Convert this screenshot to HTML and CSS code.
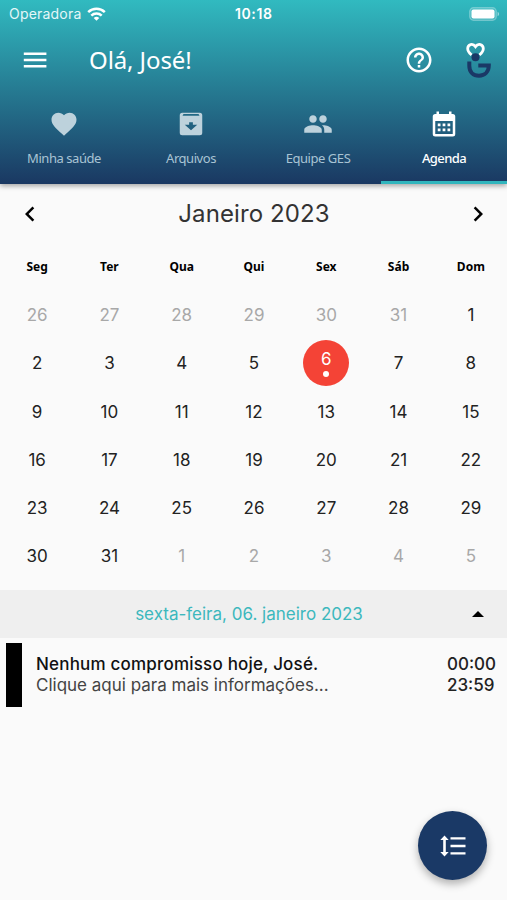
FILE: index.html
```html
<!DOCTYPE html>
<html lang="pt-BR">
<head>
    <meta charset="UTF-8">
    <meta name="viewport" content="width=device-width, initial-scale=1.0">
    <title>Agenda</title>
    <link rel="stylesheet" href="styles.css">
</head>
<body>
    <header>
        <div class="status-bar">
            <div class="carrier">
                <span>Operadora</span>
                <svg width="19" height="14" viewBox="0 0 19 14" fill="none" stroke="#fff" stroke-width="2.5">
                    <path d="M1.2 5.2a12 12 0 0 1 16.6 0"/>
                    <path d="M4.3 8.6a7.5 7.5 0 0 1 10.4 0"/>
                    <path d="M6.7 11a4 4 0 0 1 5.6 0L9.5 13.8z" fill="#fff" stroke="none"/>
                </svg>
            </div>
            <span class="time">10:18</span>
            <svg class="battery" width="31" height="14" viewBox="0 0 31 14">
                <rect x=".7" y=".7" width="26.6" height="12.6" rx="3.8" fill="#fff" fill-opacity=".15" stroke="#fff" stroke-opacity=".3" stroke-width="1.2"/>
                <rect x="2.5" y="2.5" width="23" height="9" rx="2" fill="#fff"/>
                <path d="M28.6 4.8c2 .8 2 3.6 0 4.4z" fill="#fff" fill-opacity=".5"/>
            </svg>
        </div>
        <div class="app-bar">
            <svg class="menu" width="24" height="18" viewBox="0 0 24 18" fill="#fff">
                <path d="M.8 1.5h22.600v2.6H.8zM.8 7.7h22.600v2.6H.8zM.8 13.9h22.600v2.6H.8z"/>
            </svg>
            <h1>Olá, José!</h1>
            <svg class="help" width="30" height="30" viewBox="0 0 24 24" fill="#fff">
                <path d="M11 18h2v-2h-2v2zm1-16C6.48 2 2 6.48 2 12s4.480 10 10 10 10-4.480 10-10S17.520 2 12 2zm0 18c-4.410 0-8-3.590-8-8s3.590-8 8-8 8 3.590 8 8-3.590 8-8 8zm0-14c-2.210 0-4 1.790-4 4h2c0-1.100.9-2 2-2s2 .9 2 2c0 2-3 1.750-3 5h2c0-2.250 3-2.500 3-5 0-2.210-1.790-4-4-4z"/>
            </svg>
            <svg class="logo" width="28" height="38" viewBox="0 0 28 38" fill="none">
                <path d="M8.600 14C6.300 12 4.700 10.400 4.700 7.700 4.700 3.200 9.800 1.800 12.500 5.600 15.200 1.800 20.300 3.200 20.300 7.700c0 2.700-1.600 4.300-3.900 6.300" stroke="#fff" stroke-width="2.800"/>
                <circle cx="12.500" cy="16.300" r="4" fill="#1a3866"/>
                <path d="M6.300 20.500v4.200C6.300 30.900 10.200 34.700 16 34.700c5.800 0 9.800-4 9.800-10.100h-10.500" stroke="#1a3866" stroke-width="4"/>
            </svg>
        </div>
        <nav>
            <a class="tab">
                <svg width="30" height="30" viewBox="0 0 24 24"><path d="M12 21.350l-1.450-1.320C5.400 15.360 2 12.280 2 8.500 2 5.420 4.420 3 7.500 3c1.740 0 3.410.81 4.500 2.090C13.090 3.810 14.760 3 16.500 3 19.580 3 22 5.420 22 8.500c0 3.780-3.400 6.860-8.550 11.540L12 21.350z"/></svg>
                <span>Minha saúde</span>
            </a>
            <a class="tab">
                <svg width="30" height="30" viewBox="0 0 24 24"><path fill-rule="evenodd" d="M5 3h14a2 2 0 0 1 2 2v14a2 2 0 0 1-2 2H5a2 2 0 0 1-2-2V5a2 2 0 0 1 2-2zM6 3.900L5.200 5.400h13.600l-.8-1.500zM10.500 10.500v2H7L12 17l5-4.500h-3.500v-2z"/></svg>
                <span>Arquivos</span>
            </a>
            <a class="tab">
                <svg width="30" height="30" viewBox="0 0 24 24"><path d="M16 11c1.660 0 2.990-1.340 2.990-3S17.660 5 16 5s-3 1.340-3 3 1.340 3 3 3zm-8 0c1.660 0 2.990-1.340 2.990-3S9.660 5 8 5 5 6.340 5 8s1.340 3 3 3zm0 2c-2.330 0-7 1.170-7 3.500V19h14v-2.500c0-2.330-4.670-3.500-7-3.500zm8 0c-.29 0-.62.020-.97.050 1.160.84 1.970 1.970 1.970 3.450V19h6v-2.500c0-2.330-4.670-3.500-7-3.500z"/></svg>
                <span>Equipe GES</span>
            </a>
            <a class="tab active">
                <svg width="30" height="30" viewBox="0 0 24 24"><path fill-rule="evenodd" d="M6 2h2v2h8V2h2v2h1a2 2 0 0 1 2 2v14a2 2 0 0 1-2 2H5a2 2 0 0 1-2-2V6a2 2 0 0 1 2-2h1zM5 9.500V20h14V9.500z"/><path d="M7 11.500h2.200v2.200H7zM10.900 11.500h2.200v2.200h-2.200zM14.800 11.500H17v2.200h-2.200zM7 15.600h2.200v2.200H7zM10.900 15.600h2.200v2.200h-2.200zM14.800 15.600H17v2.200h-2.200z"/></svg>
                <span>Agenda</span>
            </a>
        </nav>
    </header>

    <main>
        <div class="month">
            <svg width="30" height="30" viewBox="0 0 24 24"><path d="M15.410 7.410L14 6l-6 6 6 6 1.410-1.410L10.830 12z"/></svg>
            <h2>Janeiro 2023</h2>
            <svg width="30" height="30" viewBox="0 0 24 24"><path d="M10 6L8.590 7.410 13.170 12l-4.580 4.590L10 18l6-6z"/></svg>
        </div>

        <div class="weekdays">
            <span>Seg</span><span>Ter</span><span>Qua</span><span>Qui</span><span>Sex</span><span>Sáb</span><span>Dom</span>
        </div>

        <div class="days">
            <span class="out">26</span><span class="out">27</span><span class="out">28</span><span class="out">29</span><span class="out">30</span><span class="out">31</span><span>1</span>
            <span>2</span><span>3</span><span>4</span><span>5</span><span class="selected">6</span><span>7</span><span>8</span>
            <span>9</span><span>10</span><span>11</span><span>12</span><span>13</span><span>14</span><span>15</span>
            <span>16</span><span>17</span><span>18</span><span>19</span><span>20</span><span>21</span><span>22</span>
            <span>23</span><span>24</span><span>25</span><span>26</span><span>27</span><span>28</span><span>29</span>
            <span>30</span><span>31</span><span class="out">1</span><span class="out">2</span><span class="out">3</span><span class="out">4</span><span class="out">5</span>
        </div>

        <div class="date-bar">
            <span>sexta-feira, 06. janeiro 2023</span>
            <svg width="12" height="6" viewBox="0 0 12 6"><path d="M0 6l6-6 6 6z"/></svg>
        </div>

        <div class="event">
            <div class="event-color"></div>
            <div class="event-text">
                <strong>Nenhum compromisso hoje, José.</strong>
                <p>Clique aqui para mais informações...</p>
            </div>
            <div class="event-time">
                <span>00:00</span>
                <span>23:59</span>
            </div>
        </div>
    </main>

    <button class="fab">
        <svg width="26" height="22" viewBox="0 0 26 22" fill="#fff">
            <path d="M4.500 .6L8.700 5H5.800v12h2.900L4.500 21.400 .3 17h2.900V5H.3z"/>
            <path d="M10.500 2.200h15v2.400h-15zM10.500 9.800h15v2.400h-15zM10.500 17.200h15v2.400h-15z"/>
        </svg>
    </button>
</body>
</html>
```
FILE: styles.css
```css
* {
    box-sizing: border-box;
}
body {
    font-family: Inter, "Liberation Sans", sans-serif;
    margin: 0;
    height: 900px;
    overflow: hidden;
    background-color: #fafafa;
    color: #222;
}
svg {
    display: block;
    flex: none;
}
header {
    height: 184px;
    background: linear-gradient(#31bac0, #1a3862);
    color: #fff;
    box-shadow: 0 2px 5px rgba(0, 0, 0, 0.35);
}

/* Phone status bar */
.status-bar {
    height: 27px;
    padding: 0 7px 0 9px;
    display: grid;
    grid-template-columns: 1fr 39px 1fr;
    align-items: center;
    font-size: 14px;
}
.carrier {
    display: flex;
    align-items: center;
    gap: 6px;
    color: #e4f7f8;
    letter-spacing: 0.2px;
}
.time {
    font-weight: 600;
    letter-spacing: 0.6px;
}
.battery {
    justify-self: end;
}

.app-bar {
    height: 66px;
    padding: 0 16px 0 23px;
    display: flex;
    align-items: center;
}
h1 {
    margin: 0 auto 2px 42px;
    font-family: "Noto Sans", sans-serif;
    font-size: 24px;
    font-weight: 400;
    letter-spacing: -0.1px;
}
.logo {
    margin-left: 29px;
}

/* Tabs */
nav {
    height: 91px;
    display: flex;
}
.tab {
    flex: 1;
    display: flex;
    flex-direction: column;
    align-items: center;
    padding: 16px 0 0 1px;
    font-family: "Noto Sans", sans-serif;
    font-size: 13px;
    line-height: 20px;
    letter-spacing: -0.45px;
    color: #a9c4d4;
    border-bottom: 3px solid transparent;
}
.tab svg {
    fill: #bdd2dc;
    margin-bottom: 9px;
}
.tab.active {
    padding-left: 0;
    color: #fff;
    font-weight: 500;
    letter-spacing: -0.6px;
    border-bottom-color: #31b5bd;
}
.tab.active svg {
    fill: #fff;
}

/* Calendar */
.month {
    height: 59px;
    padding: 0 14px 0 15px;
    display: flex;
    justify-content: space-between;
    align-items: center;
}
h2 {
    margin: 0;
    font-size: 24px;
    font-weight: 400;
    letter-spacing: 0.1px;
    color: #333;
}
.weekdays, .days {
    display: grid;
    grid-template-columns: repeat(7, 1fr);
    padding-left: 1px;
    text-align: center;
}
.weekdays {
    height: 46px;
    align-items: center;
    font-family: "Noto Sans", sans-serif;
    font-size: 12px;
    font-weight: 700;
    color: #000;
}
.days {
    height: 301px;
    padding-top: 2px;
    padding-bottom: 9.5px;
    grid-template-rows: repeat(6, 1fr);
    place-items: center;
    font-size: 17px;
}
.out {
    color: #a8a8a8;
}
.selected {
    width: 46px;
    height: 46px;
    padding-top: 8px;
    border-radius: 50%;
    background-color: #f44336;
    color: #fff;
    line-height: 22px;
}
.selected::after {
    content: "";
    display: block;
    width: 6px;
    height: 6px;
    margin: 1px auto 0;
    border-radius: 50%;
    background-color: #fff;
}

/* Selected date and its events */
.date-bar {
    height: 48px;
    padding: 0 23px 0 26px;
    display: flex;
    align-items: center;
    background-color: #efefef;
    font-size: 17px;
    color: #3cb8bd;
}
.date-bar span {
    flex: 1;
    text-align: center;
}
.date-bar svg {
    fill: #000;
}
.event {
    display: flex;
    margin: 5px 11px 0 6px;
    height: 64px;
    font-size: 17px;
    line-height: 21px;
}
.event-color {
    width: 16px;
    background-color: #000;
}
.event-text {
    flex: 1;
    padding: 11px 0 0 14px;
}
.event-text strong {
    font-weight: 500;
    letter-spacing: 0.2px;
    color: #111;
}
.event-text p {
    margin: 0;
    color: #444;
}
.event-time {
    display: flex;
    flex-direction: column;
    padding-top: 11px;
    font-weight: 500;
}

.fab {
    position: absolute;
    right: 20px;
    bottom: 20px;
    width: 69px;
    height: 69px;
    padding: 0;
    border: none;
    border-radius: 50%;
    background-color: #1a3966;
    box-shadow: 0 4px 8px rgba(0, 0, 0, 0.3);
    display: flex;
    align-items: center;
    justify-content: center;
}
```
